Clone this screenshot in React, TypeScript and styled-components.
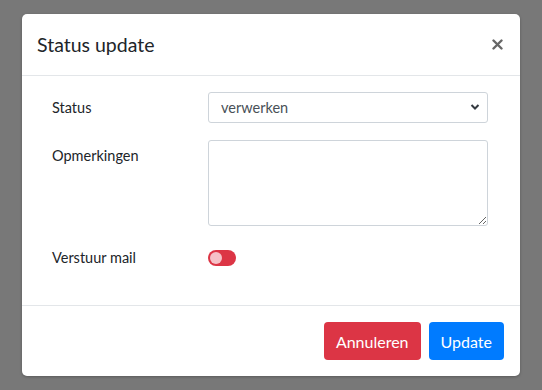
import * as React from 'react';
import styled, {createGlobalStyle} from 'styled-components';

const Global = createGlobalStyle`
  html, body {
    margin: 0;
    padding: 0;
    width: 542px;
    height: 390px;
    overflow: hidden;
  }
  body {
    font-family: Lato, "Liberation Sans", sans-serif;
    color: #212529;
  }
`;

const Backdrop = styled.div`
  width: 542px;
  height: 390px;
  background: #787878;
  padding: 14px 0 0 22px;
  box-sizing: border-box;
`;

const Modal = styled.div`
  width: 498px;
  height: 362px;
  background: #fff;
  border-radius: 5px;
  box-shadow: 0 1px 3px rgba(0, 0, 0, 0.25);
  display: flex;
  flex-direction: column;
`;

const Header = styled.div`
  height: 62px;
  box-sizing: border-box;
  padding: 0 15px;
  display: flex;
  align-items: center;
  justify-content: space-between;
  border-bottom: 1px solid #e3e6e9;
`;

const Title = styled.h5`
  margin: 0;
  font-size: 19.5px;
  font-weight: 400;
  color: #212529;
`;

const Close = styled.button`
  border: none;
  background: none;
  padding: 0;
  margin-right: 1px;
  width: 14px;
  height: 14px;
  display: flex;
  align-items: center;
  justify-content: center;
  cursor: pointer;
`;

const Body = styled.div`
  flex: 1;
  padding: 16px 15px 0;
  display: flex;
  flex-direction: column;
  gap: 17px;
`;

const Row = styled.div<{$center?: boolean; $offset?: number}>`
  display: grid;
  grid-template-columns: 141px 1fr;
  align-items: ${p => (p.$center ? 'center' : 'start')};
  padding: 0 15px;
  column-gap: 15px;
  margin-top: ${p => p.$offset ?? 0}px;
`;

const Label = styled.label<{$top?: number}>`
  font-size: 14.5px;
  color: #212529;
  padding-top: ${p => p.$top ?? 0}px;
`;

const SelectWrap = styled.div`
  position: relative;
  width: 280px;
`;

const Select = styled.select`
  appearance: none;
  -webkit-appearance: none;
  display: block;
  width: 100%;
  height: 31px;
  box-sizing: border-box;
  border: 1px solid #ced4da;
  border-radius: 3px;
  background: #fff;
  padding: 0 12px;
  font-family: Lato, "Liberation Sans", sans-serif;
  font-size: 14.5px;
  color: #495057;
  outline: none;
`;

const Chevron = styled.svg`
  position: absolute;
  right: 8px;
  top: 11px;
  pointer-events: none;
`;

const TextArea = styled.textarea`
  display: block;
  width: 280px;
  height: 86px;
  box-sizing: border-box;
  border: 1px solid #ced4da;
  border-radius: 3px;
  padding: 6px 12px;
  font-family: Lato, "Liberation Sans", sans-serif;
  font-size: 14.5px;
  outline: none;
`;

const Switch = styled.span`
  display: block;
  width: 28px;
  height: 16px;
  border-radius: 8px;
  background: #dc3545;
  box-sizing: border-box;
  padding: 2px;
`;

const Knob = styled.span`
  display: block;
  width: 12px;
  height: 12px;
  border-radius: 50%;
  background: #f6c1c7;
`;

const Footer = styled.div`
  height: 71px;
  box-sizing: border-box;
  border-top: 1px solid #e3e6e9;
  display: flex;
  justify-content: flex-end;
  align-items: center;
  gap: 8px;
  padding: 0 16px 0 0;
`;

const Button = styled.button<{$variant: 'danger' | 'primary'}>`
  height: 38px;
  padding: 0 12px;
  border: none;
  border-radius: 4px;
  font-family: Lato, "Liberation Sans", sans-serif;
  font-size: 16px;
  color: #fff;
  background: ${p => (p.$variant === 'danger' ? '#dc3545' : '#007bff')};
  cursor: pointer;
`;

export default function App() {
  return (
    <>
      <Global />
      <Backdrop>
        <Modal>
          <Header>
            <Title>Status update</Title>
            <Close aria-label="Sluiten">
              <svg width="11" height="11" viewBox="0 0 11 11">
                <path d="M1.5 1.5l8 8M9.5 1.5l-8 8" stroke="#666" strokeWidth="2.4" strokeLinecap="round" />
              </svg>
            </Close>
          </Header>
          <Body>
            <Row $center>
              <Label>Status</Label>
              <SelectWrap>
                <Select defaultValue="verwerken">
                  <option value="verwerken">verwerken</option>
                </Select>
                <Chevron width="10" height="8" viewBox="0 0 10 8">
                  <path d="M1.5 2l3.5 3.5L8.5 2" fill="none" stroke="#343a40" strokeWidth="2" />
                </Chevron>
              </SelectWrap>
            </Row>
            <Row>
              <Label $top={7}>Opmerkingen</Label>
              <TextArea />
            </Row>
            <Row $center $offset={6}>
              <Label>Verstuur mail</Label>
              <Switch>
                <Knob />
              </Switch>
            </Row>
          </Body>
          <Footer>
            <Button $variant="danger">Annuleren</Button>
            <Button $variant="primary">Update</Button>
          </Footer>
        </Modal>
      </Backdrop>
    </>
  );
}
